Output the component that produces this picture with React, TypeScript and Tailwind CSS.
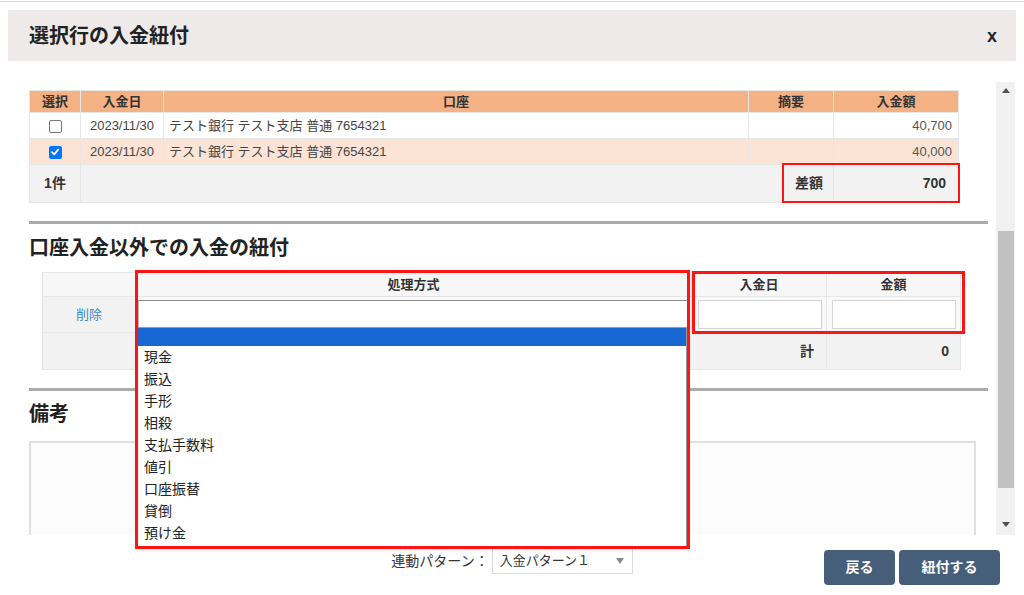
import React from "react";

const rows = [
    { checked: false, date: "2023/11/30", account: "テスト銀行 テスト支店 普通 7654321", memo: "", amount: "40,700" },
    { checked: true, date: "2023/11/30", account: "テスト銀行 テスト支店 普通 7654321", memo: "", amount: "40,000" },
];

const methods = ["現金", "振込", "手形", "相殺", "支払手数料", "値引", "口座振替", "貸倒", "預け金"];

function CheckBox({ checked }: { checked: boolean }) {
    if (checked) {
        return (
            <span className="inline-flex w-[13px] h-[13px] rounded-[2px] bg-[#0075ff] items-center justify-center align-middle">
                <svg width="10" height="10" viewBox="0 0 10 10">
                    <path d="M2 5.2 L4.2 7.4 L8.2 2.6" fill="none" stroke="#fff" strokeWidth="1.8" strokeLinecap="round" strokeLinejoin="round" />
                </svg>
            </span>
        );
    }
    return <span className="inline-block w-[13px] h-[13px] rounded-[2px] border border-[#767676] bg-white align-middle" />;
}

export default function App() {
    return (
        <div className="w-[1024px] h-[595px] overflow-hidden bg-white text-[#333] font-['Liberation_Sans','Noto_Sans_CJK_JP',sans-serif]">
            <div className="h-[2px] border-t border-[#d4d4d4] mt-px" />

            {/* Modal header */}
            <div className="mx-2 mt-[7px] h-[51px] bg-[#eeeae9] flex items-center justify-between pl-[21px] pr-[19px]">
                <h1 className="text-[20px] leading-[28px] font-bold text-[#222]">選択行の入金紐付</h1>
                <span className="text-[18px] font-bold text-[#222] leading-none">x</span>
            </div>

            {/* Body + scrollbar */}
            <div className="mt-[21px] h-[453px] flex">
                <div className="w-[996px] pl-[29px] pr-[8px] pt-[8px]">
                    {/* Selected rows table */}
                    <div className="relative">
                        <table className="table-fixed border-collapse w-[929px] text-[13px]">
                            <colgroup>
                                <col className="w-[51px]" />
                                <col className="w-[83px]" />
                                <col className="w-[585px]" />
                                <col className="w-[85px]" />
                                <col className="w-[125px]" />
                            </colgroup>
                            <thead>
                                <tr className="h-[22px] bg-[#f4b183] font-bold text-[#333]">
                                    <th className="border border-[#e8e8e8]">選択</th>
                                    <th className="border border-[#e8e8e8]">入金日</th>
                                    <th className="border border-[#e8e8e8]">口座</th>
                                    <th className="border border-[#e8e8e8]">摘要</th>
                                    <th className="border border-[#e8e8e8]">入金額</th>
                                </tr>
                            </thead>
                            <tbody>
                                {rows.map((r, i) => (
                                    <tr key={i} className={`h-[26px] ${r.checked ? "bg-[#fbe4d6]" : "bg-white"} text-[#444]`}>
                                        <td className="border border-[#e6e6e6] text-center leading-none"><CheckBox checked={r.checked} /></td>
                                        <td className="border border-[#e6e6e6] text-center">{r.date}</td>
                                        <td className="border border-[#e6e6e6] pl-[5px]">{r.account}</td>
                                        <td className="border border-[#e6e6e6]">{r.memo}</td>
                                        <td className="border border-[#e6e6e6] text-right pr-[6px] text-[#555]">{r.amount}</td>
                                    </tr>
                                ))}
                                <tr className="h-[38px] bg-[#f2f2f2] text-[14px] font-bold text-[#333]">
                                    <td className="border border-[#e6e6e6] text-center">1件</td>
                                    <td colSpan={3} className="border border-[#e6e6e6] text-right pr-[10px]">差額</td>
                                    <td className="border border-[#e6e6e6] text-right pr-[12px]">700</td>
                                </tr>
                            </tbody>
                        </table>
                        <div className="absolute left-[753px] top-[73px] w-[178px] h-[40px] border-2 border-[#ff1414]" />
                    </div>

                    <div className="mt-[18px] h-[3px] bg-[#ababab]" />

                    <h2 className="mt-[10px] text-[20px] leading-[28px] font-bold text-[#222]">口座入金以外での入金の紐付</h2>

                    {/* Other payments table */}
                    <div className="relative ml-[13px] mt-[10px] w-[918px]">
                        <table className="table-fixed border-collapse w-[918px] text-[13px]">
                            <colgroup>
                                <col className="w-[93px]" />
                                <col className="w-[556px]" />
                                <col className="w-[135px]" />
                                <col className="w-[134px]" />
                            </colgroup>
                            <thead>
                                <tr className="h-[24px] bg-[#f7f7f7] font-bold text-[#333]">
                                    <th className="border border-[#e6e6e6]"></th>
                                    <th className="border border-[#e6e6e6]">処理方式</th>
                                    <th className="border border-[#e6e6e6]">入金日</th>
                                    <th className="border border-[#e6e6e6]">金額</th>
                                </tr>
                            </thead>
                            <tbody>
                                <tr className="h-[36px]">
                                    <td className="border border-[#e6e6e6] bg-[#f2f2f2] text-center text-[#3b8bc9]">削除</td>
                                    <td className="border border-[#e6e6e6] bg-[#f9f9f9] px-[2px]">
                                        <div className="h-[30px] bg-white border border-[#bdbdbd] border-t-[#8a8a8a]" />
                                    </td>
                                    <td className="border border-[#e6e6e6] bg-[#f9f9f9] pl-[6px] pr-[4px]">
                                        <div className="h-[29px] bg-white border border-[#d4d4d4]" />
                                    </td>
                                    <td className="border border-[#e6e6e6] bg-[#f9f9f9] pl-[5px] pr-[4px]">
                                        <div className="h-[29px] bg-white border border-[#d4d4d4]" />
                                    </td>
                                </tr>
                                <tr className="h-[37px] bg-[#f2f2f2] text-[14px] font-bold text-[#333]">
                                    <td className="border border-[#e6e6e6]"></td>
                                    <td colSpan={2} className="border border-[#e6e6e6] text-right pr-[12px]">計</td>
                                    <td className="border border-[#e6e6e6] text-right pr-[11px]">0</td>
                                </tr>
                            </tbody>
                        </table>

                        {/* Open select list */}
                        <div className="absolute z-10 left-[95px] top-[55px] w-[550px] bg-white border border-[#9a9a9a] shadow-[0_2px_4px_rgba(0,0,0,0.2)] text-[14px] text-[#222] pb-[2px]">
                            <div className="h-[18px] bg-[#1967d2]" />
                            {methods.map((m) => (
                                <div key={m} className="h-[22px] leading-[22px] pl-[6px]">{m}</div>
                            ))}
                        </div>

                        <div className="absolute z-20 left-[93px] -top-[2px] w-[555px] h-[279px] border-[3px] border-[#ff1414]" />
                        <div className="absolute z-20 left-[650px] -top-[1px] w-[273px] h-[63px] border-[3px] border-[#ff1414]" />
                    </div>

                    <div className="mt-[18px] h-[3px] bg-[#ababab]" />

                    <h2 className="mt-[9px] text-[20px] leading-[28px] font-bold text-[#222]">備考</h2>

                    <div className="mt-[13px] w-[947px] h-[94px] border-t-2 border-x-2 border-[#e0e0e0] bg-[#fcfcfc]" />
                </div>

                {/* Scrollbar */}
                <div className="w-[19px] h-[453px] bg-[#f1f1f1]">
                    <div className="h-[17px] flex items-center justify-center">
                        <svg width="8" height="5" viewBox="0 0 8 5"><path d="M0 5 L4 0 L8 5 Z" fill="#505050" /></svg>
                    </div>
                    <div className="ml-[2px] mt-[132px] w-[16px] h-[257px] bg-[#c1c1c1]" />
                    <div className="mt-[28px] h-[17px] flex items-center justify-center">
                        <svg width="8" height="5" viewBox="0 0 8 5"><path d="M0 0 L8 0 L4 5 Z" fill="#505050" /></svg>
                    </div>
                </div>
            </div>

            {/* Footer */}
            <div className="h-[60px] grid grid-cols-[1fr_auto_1fr]">
                <div />
                <div className="flex items-center mt-[13px] h-[26px] text-[14px] text-[#333]">
                    <span>連動パターン：</span>
                    <div className="ml-[3px] w-[141px] h-[26px] border border-[#dcdcdc] flex items-center justify-between pl-[7px] pr-[8px] text-[13px]">
                        <span>入金パターン１</span>
                        <svg width="8" height="6" viewBox="0 0 8 6"><path d="M0 0 L8 0 L4 6 Z" fill="#8a8a8a" /></svg>
                    </div>
                </div>
                <div className="flex justify-end items-start gap-[4px] pr-[24px] pt-[15px]">
                    <button className="w-[71px] h-[35px] rounded-[4px] bg-[#465e7a] text-white text-[14px] font-bold">戻る</button>
                    <button className="w-[101px] h-[35px] rounded-[4px] bg-[#465e7a] text-white text-[14px] font-bold">紐付する</button>
                </div>
            </div>
        </div>
    );
}
